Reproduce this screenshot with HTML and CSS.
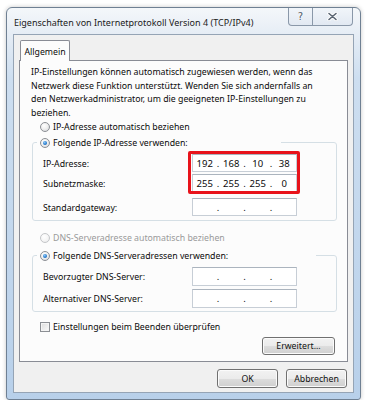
FILE: index.html
```html
<!DOCTYPE html>
<html lang="de">
<head>
<meta charset="utf-8">
<title>Eigenschaften von Internetprotokoll Version 4 (TCP/IPv4)</title>
<link rel="stylesheet" href="styles.css">
</head>
<body>
<div class="window">
  <div class="titlebar">
    <span class="title">Eigenschaften von Internetprotokoll Version 4 (TCP/IPv4)</span>
    <div class="caption-btns">
      <span class="cbtn help">?</span>
      <span class="cbtn close">
        <svg width="11" height="9" viewBox="0 0 11 9">
          <path d="M2 1.5 L9 7.5 M9 1.5 L2 7.5" stroke="#ffffff" stroke-width="3.4" stroke-linecap="round" fill="none"/>
          <path d="M2 1.5 L9 7.5 M9 1.5 L2 7.5" stroke="#5a6573" stroke-width="1.6" stroke-linecap="round" fill="none"/>
        </svg>
      </span>
    </div>
  </div>
  <div class="client">
    <div class="tabs"><span class="tab">Allgemein</span></div>
    <div class="panel">
      <p class="intro">IP-Einstellungen können automatisch zugewiesen werden, wenn das<br>Netzwerk diese Funktion unterstützt. Wenden Sie sich andernfalls an<br>den Netzwerkadministrator, um die geeigneten IP-Einstellungen zu<br>beziehen.</p>
      <div class="option"><span class="rb"></span>IP-Adresse automatisch beziehen</div>
      <fieldset class="group group-ip">
        <legend class="legend-ip"><span class="rb checked"></span>Folgende IP-Adresse verwenden:</legend>
        <div class="grid">
          <span class="lbl r1">IP-Adresse:</span>
          <div class="ip r1"><span class="oct">192</span><span class="dot">.</span><span class="oct">168</span><span class="dot">.</span><span class="oct">10</span><span class="dot">.</span><span class="oct">38</span></div>
          <span class="lbl r2">Subnetzmaske:</span>
          <div class="ip r2"><span class="oct">255</span><span class="dot">.</span><span class="oct">255</span><span class="dot">.</span><span class="oct">255</span><span class="dot">.</span><span class="oct">0</span></div>
          <span class="lbl r3">Standardgateway:</span>
          <div class="ip r3"><span class="oct"></span><span class="dot">.</span><span class="oct"></span><span class="dot">.</span><span class="oct"></span><span class="dot">.</span><span class="oct"></span></div>
          <div class="highlight"></div>
        </div>
      </fieldset>
      <div class="option disabled dns-auto"><span class="rb"></span>DNS-Serveradresse automatisch beziehen</div>
      <fieldset class="group group-dns">
        <legend class="legend-dns"><span class="rb checked"></span>Folgende DNS-Serveradressen verwenden:</legend>
        <div class="grid grid-dns">
          <span class="lbl r1">Bevorzugter DNS-Server:</span>
          <div class="ip r1"><span class="oct"></span><span class="dot">.</span><span class="oct"></span><span class="dot">.</span><span class="oct"></span><span class="dot">.</span><span class="oct"></span></div>
          <span class="lbl r2">Alternativer DNS-Server:</span>
          <div class="ip r2"><span class="oct"></span><span class="dot">.</span><span class="oct"></span><span class="dot">.</span><span class="oct"></span><span class="dot">.</span><span class="oct"></span></div>
        </div>
      </fieldset>
      <div class="option check-row"><span class="cb"></span>Einstellungen beim Beenden überprüfen</div>
      <div class="adv-row"><button class="btn btn-adv">Erweitert...</button></div>
    </div>
    <div class="actions">
      <button class="btn btn-dlg">OK</button>
      <button class="btn btn-dlg">Abbrechen</button>
    </div>
  </div>
</div>
</body>
</html>
```
FILE: styles.css
```css
* { box-sizing: border-box; }

html, body { overflow: hidden; }

body {
  margin: 0;
  background: #ffffff;
  font-family: "Noto Sans", "Open Sans", sans-serif;
  font-size: 8.75px;
  color: #0a0a0a;
}

.window {
  margin: 7px 0 0 6px;
  width: 355px;
  height: 393px;
  border: 1px solid #6f8093;
  border-radius: 6px 6px 3px 3px;
  padding: 0 6px 6px 6px;
  background: linear-gradient(to bottom, #f4f7fa 0, #e6edf5 26px, #cddef0 70px, #b8d0ea 100%);
  box-shadow: 0 0 4px rgba(0, 0, 0, 0.22);
  display: flex;
  flex-direction: column;
  overflow: hidden;
}

.titlebar {
  height: 26px;
  flex: none;
  display: flex;
  align-items: flex-start;
}

.title {
  align-self: center;
  padding-top: 4px;
  margin-left: 1px;
  font-size: 9px;
  line-height: 12px;
  color: #1b1b1b;
  white-space: nowrap;
  min-width: 0;
}

.caption-btns {
  margin-left: auto;
  margin-right: 1px;
  display: flex;
  flex: none;
  height: 18px;
  border: 1px solid #8a98a9;
  border-top: none;
  border-radius: 0 0 4px 4px;
  background: linear-gradient(to bottom, #f1f5fa, #e2e9f2);
  overflow: hidden;
}

.cbtn {
  display: flex;
  align-items: center;
  justify-content: center;
  height: 100%;
}

.help {
  width: 24px;
  border-right: 1px solid #8a98a9;
  font-family: "DejaVu Sans", sans-serif;
  font-size: 10px;
  color: #4f5a68;
  text-shadow: 0 0 2px #fff, 0 0 1px #fff;
}

.close {
  width: 39px;
}

.client {
  flex: 1;
  min-height: 0;
  border: 1px solid #95a4b5;
  background: #f0f0f0;
  padding: 5px 5px 4px 5px;
  display: flex;
  flex-direction: column;
}

.tabs {
  display: flex;
  padding-left: 1px;
  position: relative;
  z-index: 1;
  flex: none;
}

.tab {
  height: 21px;
  width: 50px;
  padding-top: 2px;
  border: 1px solid #898c95;
  border-bottom: none;
  border-radius: 2px 2px 0 0;
  background: #fcfcfc;
  display: flex;
  align-items: center;
  justify-content: center;
  margin-bottom: -1px;
}

.panel {
  flex: 1;
  border: 1px solid #898c95;
  background: #fcfcfc;
  padding: 5px 12px 0 11px;
  display: flex;
  flex-direction: column;
}

.intro {
  margin: 0;
  line-height: 13.5px;
  white-space: nowrap;
}

.option {
  display: flex;
  align-items: center;
  height: 13px;
  margin-left: 9px;
  white-space: nowrap;
}

.disabled { color: #9a9a9a; }

.rb {
  width: 10px;
  height: 10px;
  border-radius: 50%;
  border: 1px solid #8c8f94;
  background: radial-gradient(circle at 40% 35%, #ffffff 0, #f0f0f0 45%, #cfd2d6 100%);
  margin-right: 3px;
  flex: none;
  position: relative;
}

.disabled .rb {
  border-color: #c4c6c9;
  background: radial-gradient(circle at 40% 35%, #ffffff 0, #f4f4f4 60%, #e2e3e5 100%);
}

.rb.checked::after {
  content: "";
  position: absolute;
  left: 2px;
  top: 2px;
  width: 4px;
  height: 4px;
  border-radius: 50%;
  background: radial-gradient(circle at 40% 35%, #8fc8f5 0, #2a7fd1 55%, #184c89 100%);
}

.cb {
  width: 10px;
  height: 10px;
  border: 1px solid #8c8f94;
  background: linear-gradient(135deg, #dcdcdc, #fbfbfb);
  box-shadow: inset 0 0 0 1px #f4f4f4;
  margin-right: 3px;
  flex: none;
}

.group {
  margin: 3px 0 0 1px;
  width: 305px;
  border: 1px solid #d5dfe5;
  border-radius: 3px;
  padding: 0 0 4px 0;
  min-width: 0;
}

.group legend {
  display: flex;
  align-items: center;
  height: 13px;
  padding: 0 0 0 3px;
  margin-left: 4px;
  white-space: nowrap;
}

.legend-ip { width: 244px; }
.legend-dns { width: 279px; }

.grid {
  display: grid;
  grid-template-columns: 149px 105px;
  grid-template-rows: 18px 18px 22px;
  row-gap: 2px;
  margin: 5px 0 0 10px;
  align-items: end;
}

.r1 { grid-row: 1; }
.r2 { grid-row: 2; }
.r3 { grid-row: 3; }
.lbl { grid-column: 1; white-space: nowrap; height: 18px; line-height: 20px; }
.ip { grid-column: 2; height: 18px; }

.grid-dns {
  grid-template-rows: 19px 19px;
  row-gap: 3px;
  margin-top: 5px;
}

.grid-dns .lbl { height: 19px; line-height: 21px; }
.grid-dns .ip { height: 19px; }

.group-dns { padding-bottom: 3px; }

.ip {
  border: 1px solid #c7ced6;
  border-top-color: #abb4be;
  background: #ffffff;
  display: flex;
  align-items: center;
  font-size: 9.5px;
}

.oct {
  flex: 1;
  text-align: center;
}

.dot {
  width: 3px;
  text-align: center;
}

.highlight {
  grid-column: 2;
  grid-row: 1 / 3;
  align-self: stretch;
  margin: -3px -3px -2px -4px;
  border: 3px solid #e8131b;
  border-radius: 2px;
}

.dns-auto { margin-top: 10px; }

.group-dns { margin-top: 5px; }

.check-row { margin-top: 8px; }

.adv-row {
  display: flex;
  justify-content: flex-end;
  margin-top: 4px;
}

.btn {
  font-family: inherit;
  font-size: 8.75px;
  color: #111;
  border: 1px solid #707070;
  border-radius: 3px;
  background: linear-gradient(to bottom, #f2f2f2 0, #ebebeb 50%, #dddddd 51%, #cfcfcf 100%);
  box-shadow: inset 0 0 0 1px #fbfbfb;
  padding: 0;
  display: flex;
  align-items: center;
  justify-content: center;
}

.btn-adv {
  width: 73px;
  height: 18px;
}

.actions {
  display: flex;
  flex: none;
  justify-content: flex-end;
  gap: 8px;
  margin-top: 7px;
  padding-right: 1px;
}

.btn-dlg {
  width: 61px;
  height: 19px;
}
```
